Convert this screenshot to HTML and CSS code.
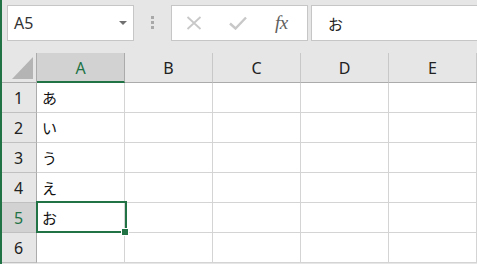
FILE: index.html
```html
<!DOCTYPE html>
<html lang="ja">
<head>
  <meta charset="UTF-8">
  <title>Sheet</title>
  <link rel="stylesheet" href="styles.css">
</head>
<body>
  <div class="app">

    <div class="toolbar">
      <div class="name-box">
        <span>A5</span>
        <span class="caret"></span>
      </div>
      <div class="grip">
        <i></i><i></i><i></i>
      </div>
      <div class="fx-buttons">
        <svg class="btn-icon" width="16" height="14" viewBox="0 0 16 14">
          <path d="M1.5 1 L14.5 13 M14.5 1 L1.5 13" stroke="#c8c8c8" stroke-width="1.8" fill="none"/>
        </svg>
        <svg class="btn-icon" width="18" height="14" viewBox="0 0 18 14">
          <path d="M1 7.5 L6.5 12.5 L17 1.5" stroke="#c8c8c8" stroke-width="2.4" fill="none"/>
        </svg>
        <span class="fx">fx</span>
      </div>
      <div class="formula">お</div>
    </div>

    <div class="sheet">
      <div class="corner"><span class="tri"></span></div>
      <div class="col-head active">A</div>
      <div class="col-head">B</div>
      <div class="col-head">C</div>
      <div class="col-head">D</div>
      <div class="col-head">E</div>

      <div class="row-head">1</div>
      <div class="cell">あ</div><div class="cell"></div><div class="cell"></div><div class="cell"></div><div class="cell"></div>

      <div class="row-head">2</div>
      <div class="cell">い</div><div class="cell"></div><div class="cell"></div><div class="cell"></div><div class="cell"></div>

      <div class="row-head">3</div>
      <div class="cell">う</div><div class="cell"></div><div class="cell"></div><div class="cell"></div><div class="cell"></div>

      <div class="row-head">4</div>
      <div class="cell">え</div><div class="cell"></div><div class="cell"></div><div class="cell"></div><div class="cell"></div>

      <div class="row-head active">5</div>
      <div class="cell selected">お<span class="sel-box"></span><span class="handle"></span></div><div class="cell"></div><div class="cell"></div><div class="cell"></div><div class="cell"></div>

      <div class="row-head">6</div>
      <div class="cell"></div><div class="cell"></div><div class="cell"></div><div class="cell"></div><div class="cell"></div>
    </div>

  </div>
</body>
</html>
```

FILE: styles.css
```css
body {
  margin: 0;
  padding: 0;
  background-color: #e6e6e6;
  font-family: "Noto Sans", "Noto Sans CJK JP", sans-serif;
  color: #222;
}

.app {
  width: 475px;
  height: 264px;
  border-left: 2px solid #217346;
  overflow: hidden;
}

/* formula bar */

.toolbar {
  display: flex;
  align-items: flex-start;
  height: 53px;
  padding: 5px 0 0 5px;
  box-sizing: border-box;
}

.name-box,
.fx-buttons,
.formula {
  height: 36px;
  box-sizing: border-box;
  background-color: #fff;
  border: 1px solid #c6c6c6;
}

.name-box {
  width: 127px;
  display: flex;
  align-items: center;
  justify-content: space-between;
  padding: 0 6px 0 6px;
  font-size: 16px;
  color: #333;
}

.caret {
  width: 0;
  height: 0;
  border-left: 4px solid transparent;
  border-right: 4px solid transparent;
  border-top: 4px solid #707070;
}

.grip {
  width: 37px;
  display: flex;
  flex-direction: column;
  align-items: center;
  gap: 2px;
  padding-top: 11px;
}

.grip i {
  display: block;
  width: 3px;
  height: 3px;
  background-color: #a8a8a8;
}

.fx-buttons {
  width: 137px;
  display: flex;
  align-items: center;
  padding-left: 14px;
  gap: 27px;
}

.fx {
  font-family: "Liberation Serif", serif;
  font-style: italic;
  font-size: 19px;
  color: #606060;
  margin-left: 1px;
  letter-spacing: -0.5px;
}

.formula {
  flex: 1;
  margin-left: 3px;
  margin-right: -4px;
  display: flex;
  align-items: center;
  padding-left: 16px;
  font-family: "Noto Sans CJK JP", sans-serif;
  font-size: 15px;
}

/* grid */

.sheet {
  display: grid;
  grid-template-columns: 35px repeat(5, 88px);
  grid-auto-rows: 30px;
  background-color: #fff;
}

.corner,
.col-head,
.row-head,
.cell {
  box-sizing: border-box;
}

.corner {
  background-color: #e6e6e6;
  border-right: 1px solid #ababab;
  border-bottom: 1px solid #ababab;
  display: flex;
  align-items: flex-end;
  justify-content: flex-end;
  padding: 0 3px 3px 0;
}

.tri {
  width: 21px;
  height: 22px;
  background-color: #b4b4b4;
  clip-path: polygon(100% 0, 100% 100%, 0 100%);
}

.col-head {
  background-color: #e6e6e6;
  border-right: 1px solid #c8c8c8;
  border-bottom: 1px solid #ababab;
  display: flex;
  align-items: center;
  justify-content: center;
  font-size: 16px;
  padding-top: 1px;
}

.col-head.active {
  background-color: #d2d2d2;
  color: #217346;
  border-bottom: 2px solid #217346;
  border-right-color: #ababab;
}

.row-head {
  background-color: #e6e6e6;
  border-right: 1px solid #ababab;
  border-bottom: 1px solid #c0c0c0;
  display: flex;
  align-items: center;
  justify-content: center;
  font-size: 16px;
  padding-right: 1px;
}

.row-head.active {
  background-color: #d2d2d2;
  color: #217346;
}

.cell {
  border-right: 1px solid #d4d4d4;
  border-bottom: 1px solid #d4d4d4;
  display: flex;
  align-items: center;
  padding-left: 5px;
  font-family: "Noto Sans CJK JP", sans-serif;
  font-size: 15px;
  color: #111;
}

.cell.selected {
  position: relative;
}

.sel-box {
  position: absolute;
  left: -1px;
  top: -2px;
  width: 91px;
  height: 32px;
  box-sizing: border-box;
  border: 2px solid #217346;
}

.handle {
  position: absolute;
  left: 85px;
  top: 26px;
  width: 6px;
  height: 6px;
  background-color: #217346;
  box-shadow: 0 0 0 1px #fff;
}
```
